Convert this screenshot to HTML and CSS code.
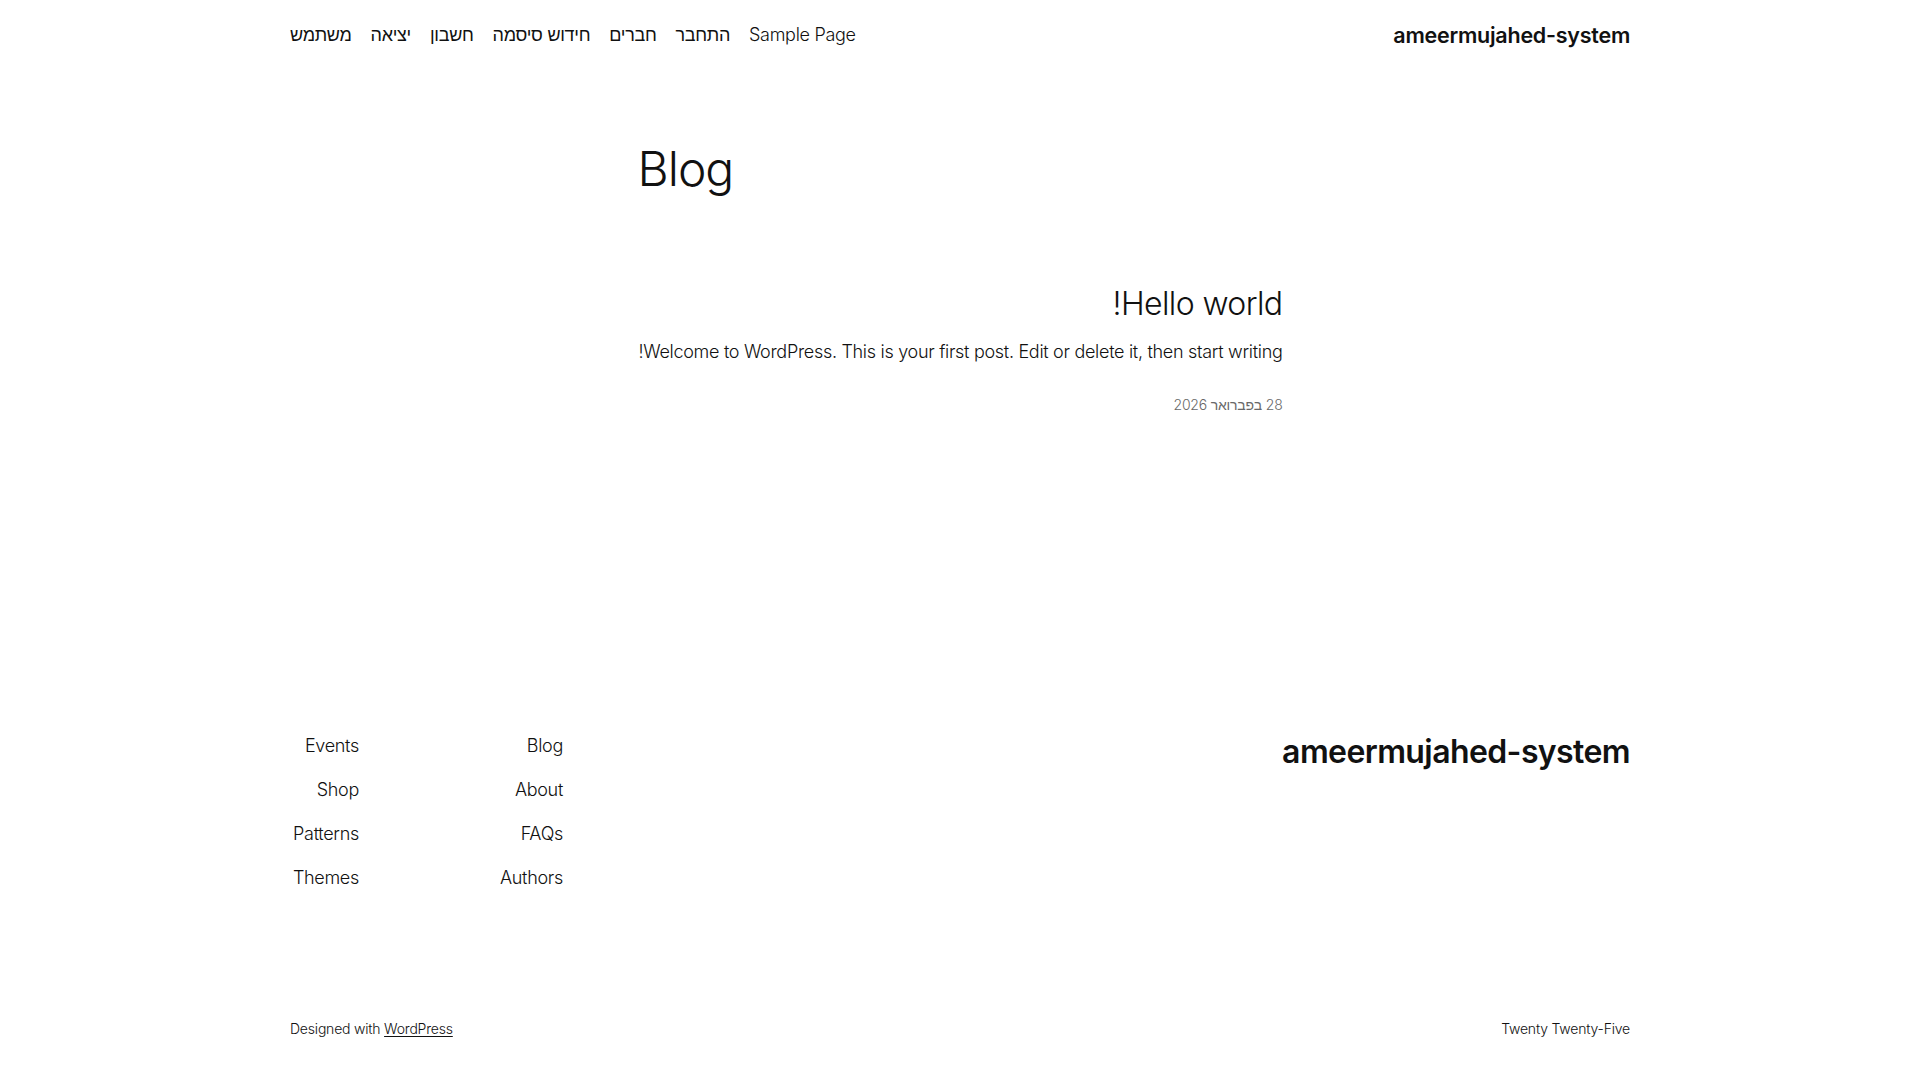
FILE: index.html
```html
<!DOCTYPE html>
<html lang="he" dir="rtl">
<head>
<meta charset="utf-8">
<title>Blog – ameermujahed-system</title>
<link rel="stylesheet" href="styles.css">
</head>
<body>
<header class="site-header">
  <div class="wrap header-row">
    <a class="site-title" href="#">ameermujahed-system</a>
    <nav class="main-nav">
      <a href="#">Sample Page</a>
      <a href="#">התחבר</a>
      <a href="#">חברים</a>
      <a href="#">חידוש סיסמה</a>
      <a href="#">חשבון</a>
      <a href="#">יציאה</a>
      <a href="#">משתמש</a>
    </nav>
  </div>
</header>

<main class="content">
  <h1 class="page-title" dir="ltr">Blog</h1>
  <article class="post">
    <h2 class="post-title"><a href="#">Hello world!</a></h2>
    <p class="post-excerpt">Welcome to WordPress. This is your first post. Edit or delete it, then start writing!</p>
    <div class="post-date">28 בפברואר 2026</div>
  </article>
</main>

<footer class="site-footer">
  <div class="wrap footer-top">
    <a class="footer-title" href="#">ameermujahed-system</a>
    <div class="footer-navs">
      <ul class="footer-col">
        <li><a href="#">Blog</a></li>
        <li><a href="#">About</a></li>
        <li><a href="#">FAQs</a></li>
        <li><a href="#">Authors</a></li>
      </ul>
      <ul class="footer-col">
        <li><a href="#">Events</a></li>
        <li><a href="#">Shop</a></li>
        <li><a href="#">Patterns</a></li>
        <li><a href="#">Themes</a></li>
      </ul>
    </div>
  </div>
  <div class="wrap footer-bottom">
    <span class="theme-name">Twenty Twenty-Five</span>
    <span class="credit">Designed with <a href="#">WordPress</a></span>
  </div>
</footer>
</body>
</html>
```

FILE: styles.css
```css
html, body {
  margin: 0;
  padding: 0;
  background: #ffffff;
}

body {
  font-family: Inter, "Noto Sans", "Liberation Sans", sans-serif;
  font-weight: 300;
  color: #111111;
  font-size: 18px;
  -webkit-font-smoothing: antialiased;
}

a {
  color: inherit;
  text-decoration: none;
}

.wrap {
  width: 1340px;
  margin: 0 auto;
}

/* Header */
.header-row {
  height: 69px;
  display: flex;
  justify-content: space-between;
  align-items: center;
}

.site-title {
  font-size: 21.5px;
  font-weight: 600;
  letter-spacing: -0.25px;
}

.main-nav {
  display: flex;
  gap: 19px;
  font-size: 18px;
  letter-spacing: -0.3px;
}

/* Content */
.content {
  width: 645px;
  margin: 0 auto;
}

.page-title {
  margin: 0;
  padding-top: 71px;
  font-size: 48px;
  font-weight: 300;
  line-height: 1.2;
  text-align: left;
  letter-spacing: -1px;
}

.post {
  margin-top: 87px;
}

.post-title {
  margin: 0;
  font-size: 32px;
  font-weight: 300;
  line-height: 1.2;
  letter-spacing: -0.6px;
}

.post-excerpt {
  margin: 16px 0 0;
  font-size: 18px;
  line-height: 1.4;
  letter-spacing: -0.3px;
}

.post-date {
  margin-top: 32px;
  font-size: 14px;
  color: #686868;
  letter-spacing: -0.2px;
}

/* Footer */
.site-footer {
  margin-top: 320px;
}

.footer-top {
  display: flex;
  justify-content: space-between;
  align-items: flex-start;
}

.footer-title {
  font-size: 32px;
  font-weight: 600;
  letter-spacing: -0.6px;
  line-height: 1.2;
}

.footer-navs {
  display: flex;
}

.footer-col {
  list-style: none;
  margin: 0;
  padding: 0;
  width: 204px;
  display: flex;
  flex-direction: column;
  gap: 18px;
  font-size: 18px;
  letter-spacing: -0.3px;
}

.footer-col:last-child {
  width: 69px;
}

.footer-col li {
  line-height: 26px;
}

.footer-bottom {
  margin-top: 129px;
  display: flex;
  justify-content: space-between;
  align-items: center;
  font-size: 14px;
  letter-spacing: -0.2px;
  padding-bottom: 40px;
}

.credit a {
  text-decoration: underline;
  text-underline-offset: 2px;
}
```
